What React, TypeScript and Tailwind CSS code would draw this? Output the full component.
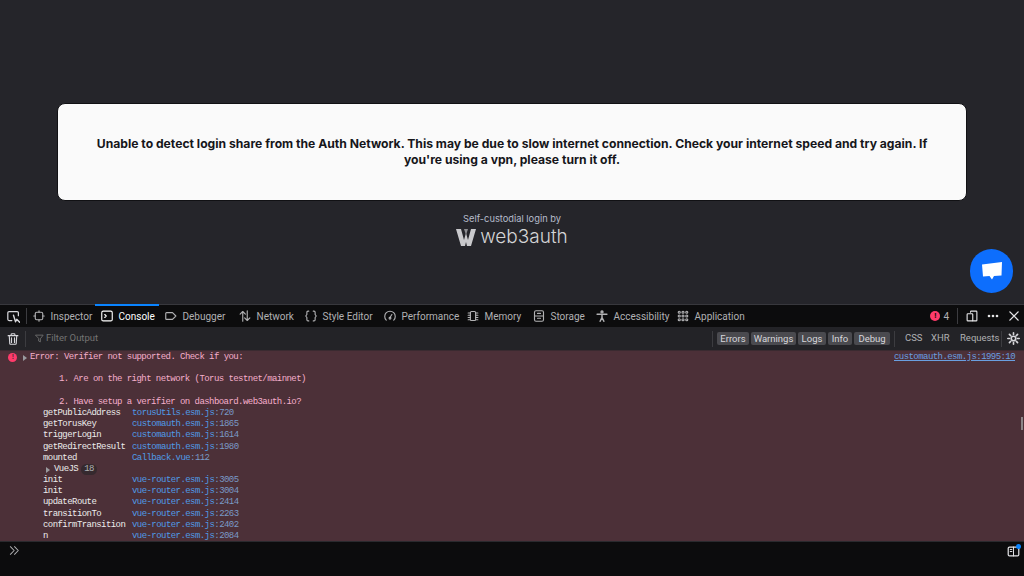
const ui = { fontFamily: 'Roboto, sans-serif' };

function Icon({ children, w = 12 }: { children: React.ReactNode; w?: number }) {
  return (
    <svg width={w} height={w} viewBox="0 0 16 16" fill="none" stroke="currentColor" strokeWidth="1.5" strokeLinecap="round" strokeLinejoin="round" className="shrink-0">
      {children}
    </svg>
  );
}

const tabs = [
  { label: "Inspector", w: "w-[68px]", icon: <><rect x="3" y="3" width="10" height="10" rx="2" /><path d="M8 1v2M8 13v2M1 8h2M13 8h2" /></> },
  { label: "Console", w: "w-[64px]", active: true, icon: <><rect x="1" y="1.500" width="14" height="13" rx="2" /><path d="M5 6l2 2-2 2" /></> },
  { label: "Debugger", w: "w-[74px]", icon: <path d="M2 3.500h8l4.500 4.500-4.500 4.500H2a1 1 0 0 1-1-1v-7a1 1 0 0 1 1-1z" /> },
  { label: "Network", w: "w-[66px]", icon: <path d="M5 15V2M1.500 5.500L5 2l3.500 3.500M11 1v13M7.500 10.500L11 14l3.500-3.500" /> },
  { label: "Style Editor", w: "w-[79px]", icon: <path d="M5 1.500H4a1.500 1.500 0 0 0-1.500 1.500v3L1 8l1.500 2v3A1.500 1.500 0 0 0 4 14.500h1M11 1.500h1A1.500 1.500 0 0 1 13.500 3v3L15 8l-1.500 2v3a1.500 1.500 0 0 1-1.500 1.500h-1" /> },
  { label: "Performance", w: "w-[83px]", icon: <><path d="M3 13.500A7 7 0 1 1 13 13.500" /><path d="M8 10l2.500-4" /><circle cx="8" cy="11" r="1.200" /></> },
  { label: "Memory", w: "w-[66px]", icon: <><rect x="4.500" y="2" width="7" height="12" rx="1.500" /><path d="M1.500 4h3M1.500 7h3M1.500 10h3M1.500 13h3M11.500 4h3M11.500 7h3M11.500 10h3M11.500 13h3" /></> },
  { label: "Storage", w: "w-[63px]", icon: <><rect x="2" y="1" width="12" height="14" rx="2" /><path d="M2 8h12M6 4.500h4M6 11h4" /></> },
  { label: "Accessibility", w: "w-[81px]", icon: <><circle cx="8" cy="2.500" r="1.500" fill="currentColor" /><path d="M1.500 5.500h13M8 5.500V10M8 10l-2.500 5M8 10l2.500 5" strokeWidth="2" /></> },
  { label: "Application", w: "w-[80px]", icon: <><circle cx="3" cy="3" r="1.400" /><circle cx="8" cy="3" r="1.400" /><circle cx="13" cy="3" r="1.400" /><circle cx="3" cy="8" r="1.400" /><circle cx="8" cy="8" r="1.400" /><circle cx="13" cy="8" r="1.400" /><circle cx="3" cy="13" r="1.400" /><circle cx="8" cy="13" r="1.400" /><circle cx="13" cy="13" r="1.400" /></> },
];

const stack = [
  ["getPublicAddress", "torusUtils.esm.js", "720"],
  ["getTorusKey", "customauth.esm.js", "1865"],
  ["triggerLogin", "customauth.esm.js", "1614"],
  ["getRedirectResult", "customauth.esm.js", "1980"],
  ["mounted", "Callback.vue", "112"],
];

const stack2 = [
  ["init", "vue-router.esm.js", "3005"],
  ["init", "vue-router.esm.js", "3004"],
  ["updateRoute", "vue-router.esm.js", "2414"],
  ["transitionTo", "vue-router.esm.js", "2263"],
  ["confirmTransition", "vue-router.esm.js", "2402"],
  ["n", "vue-router.esm.js", "2084"],
];

function Frame({ row }: { row: string[] }) {
  return (
    <div className="flex h-[11.200px] pl-[43px] items-center">
      <span className="w-[89px] shrink-0 text-[#ececec]">{row[0]}</span>
      <span className="text-[#4f9be6]">{row[1]}<span className="text-[#7a9ac6]">:{row[2]}</span></span>
    </div>
  );
}

function Divider() {
  return <div className="w-px h-[16px] self-center bg-[#3c3c40] shrink-0" />;
}

export default function App() {
  return (
    <div className="flex flex-col h-[576px] w-[1024px] overflow-hidden bg-[#25252a]">
      {/* page */}
      <div className="relative h-[304px] shrink-0 px-[57px] pt-[103px] flex flex-col items-center" style={{ fontFamily: 'Inter, sans-serif' }}>
        <div className="w-[910px] h-[98px] rounded-[8px] bg-[#fafafa] border border-[#111114] flex flex-col items-center justify-center pb-[1px]">
          <p className="text-[12.150px] leading-[16px] font-bold text-[#16161a] text-center">
            Unable to detect login share from the Auth Network. This may be due to slow internet connection. Check your internet speed and try again. If
            <br />
            you're using a vpn, please turn it off.
          </p>
        </div>
        <div className="mt-[12px] text-[9.300px] leading-[12px] text-[#b5bccb]">Self-custodial login by</div>
        <div className="flex items-center gap-[4px] h-[22px] mt-[1px] text-[#d4d4d6]">
          <svg width="20" height="17" viewBox="0 0 20 17">
            <path d="M0 0h5l3 11 2-7 2 7 3-11h5l-5 17h-4l-1-4-1 4H5z" fill="#c9c9cc" />
            <path d="M8 0h4l-2 6z" fill="#8e8e92" />
          </svg>
          <span className="text-[19px] leading-[22px] font-light">web3auth</span>
        </div>
        <button className="absolute left-[970px] top-[249px] w-[43px] h-[44px] rounded-full bg-[#0d6efd] flex items-center justify-center">
          <svg width="22" height="20" viewBox="0 0 22 20">
            <path d="M1 3.500L21 1l-.5 13.500-7.500.5-2 3.500-2.500-3.500-6.500.5z" fill="#fff" />
          </svg>
        </button>
      </div>

      {/* toolbar */}
      <div className="h-[23px] shrink-0 bg-[#0c0c0d] flex items-stretch border-t border-[#38383d] text-[10px] text-[#b1b1b3]" style={ui}>
        <div className="w-[27px] flex items-center pl-[7px] shrink-0 text-[#d7d7db]">
          <Icon w={13}><path d="M14 7V3.500A1.500 1.500 0 0 0 12.500 2h-10A1.500 1.500 0 0 0 1 3.500v8A1.500 1.500 0 0 0 2.500 13H6" /><path d="M8 6.500l2.500 8 1.500-3 3.500 3.500" strokeWidth="1.700" /></Icon>
        </div>
        <div className="w-px h-[16px] self-center bg-[#3c3c40] -ml-[1px]" />
        {tabs.map((t) => (
          <div key={t.label} className={`${t.w} relative flex items-center pl-[6px] gap-[5.500px] shrink-0 ${t.active ? "text-white" : ""}`}>
            {t.active && <div className="absolute left-0 right-0 -top-[1px] h-[2px] bg-[#0a84ff]" />}
            <Icon>{t.icon}</Icon>
            <span className="whitespace-nowrap">{t.label}</span>
          </div>
        ))}
        <div className="flex-1" />
        <div className="flex items-center gap-[3px] pr-[8px]">
          <span className="w-[10px] h-[10px] rounded-full bg-[#ff3b6b] text-[#0c0c0d] text-[8px] font-bold leading-[10px] text-center">!</span>
          <span className="text-[#b1b1b3]">4</span>
        </div>
        <Divider />
        <div className="flex items-center pl-[8px] gap-[9px] pr-[4px] text-[#e4e4e6]">
          <Icon w={12}><path d="M6 3V2.500A1 1 0 0 1 7 1.500h6.500a1 1 0 0 1 1 1v11a1 1 0 0 1-1 1H9" /><rect x="1.500" y="5" width="7.500" height="9.500" rx="1" /></Icon>
          <svg width="12" height="12" viewBox="0 0 12 12" fill="currentColor"><circle cx="2" cy="6" r="1.300" /><circle cx="6" cy="6" r="1.300" /><circle cx="10" cy="6" r="1.300" /></svg>
          <Icon w={12}><path d="M2.500 2.500l11 11M13.500 2.500l-11 11" strokeWidth="1.800" /></Icon>
        </div>
      </div>

      {/* filter bar */}
      <div className="h-[23px] shrink-0 bg-[#232327] flex items-center text-[9.500px] text-[#b1b1b3]" style={ui}>
        <div className="w-[25px] pl-[7px] text-[#d7d7db]">
          <Icon w={12}><path d="M1.500 3.500h13M5.500 3.500V2a1 1 0 0 1 1-1h3a1 1 0 0 1 1 1v1.500M3 3.500l.7 10.500a1 1 0 0 0 1 1h6.600a1 1 0 0 0 1-1L13 3.500M6 6.500v6M10 6.500v6" /></Icon>
        </div>
        <Divider />
        <div className="flex items-center gap-[2px] pl-[9px] text-[#737373]">
          <Icon w={9}><path d="M1.500 2h13L9.500 8.500V14l-3-1.500v-4z" /></Icon>
          <span>Filter Output</span>
        </div>
        <div className="flex-1" />
        <Divider />
        <div className="flex items-center gap-[2px] pl-[4px] pr-[4px] text-[#d7d7db]">
          {[["Errors", "w-[32px]"], ["Warnings", "w-[45px]"], ["Logs", "w-[28px]"], ["Info", "w-[24px]"], ["Debug", "w-[36px]"]].map(([label, w]) => (
            <span key={label} className={`${w} h-[13px] rounded-[2px] bg-[#4a4a4f] leading-[13px] text-center`}>{label}</span>
          ))}
        </div>
        <Divider />
        <div className="flex items-center pl-[10px] pr-[6px] gap-[12px]">
          <span className="w-[14px]">CSS</span>
          <span className="w-[17px]">XHR</span>
          <span className="w-[35px] whitespace-nowrap">Requests</span>
        </div>
        <Divider />
        <div className="pl-[5px] pr-[4px] text-[#d7d7db]">
          <Icon w={13}><circle cx="8" cy="8" r="2.800" strokeWidth="2" /><path d="M8 1v2M8 13v2M1 8h2M13 8h2M3 3l1.500 1.500M11.500 11.500L13 13M13 3l-1.500 1.500M4.500 11.500L3 13" strokeWidth="2" /></Icon>
        </div>
      </div>

      {/* console output */}
      <div className="relative h-[191px] shrink-0 overflow-hidden bg-[#4c3038] text-[9px] tracking-[-0.560px] leading-[11.200px] border-t border-[#3a2a30]" style={{ fontFamily: '"Liberation Mono", monospace' }}>
        <div className="pt-[1px] text-[#f5aecb]">
          <div className="relative flex h-[11.200px] pl-[30px] items-center">
            <span className="absolute left-[8px] top-[1px] w-[9px] h-[9px] rounded-full bg-[#ff3b6b] text-[7px] font-bold leading-[9px] text-center text-[#4c3038]">!</span>
            <span className="absolute left-[23px] top-[3px] w-0 h-0 border-y-[3px] border-y-transparent border-l-[4px] border-l-[#9a9a9e]" />
            <span>Error: Verifier not supported. Check if you:</span>
            <span className="absolute left-[894px] text-[#6a9fe0] underline">customauth.esm.js:1995:10</span>
          </div>
          <div className="h-[11.200px]" />
          <div className="pl-[59px]">1. Are on the right network (Torus testnet/mainnet)</div>
          <div className="h-[11.200px]" />
          <div className="pl-[59px]">2. Have setup a verifier on dashboard.web3auth.io?</div>
        </div>
        {stack.map((r, i) => <Frame key={i} row={r} />)}
        <div className="relative flex h-[11.200px] items-center pl-[54px] text-[#ececec]">
          <span className="absolute left-[46px] top-[3px] w-0 h-0 border-y-[3px] border-y-transparent border-l-[4px] border-l-[#9a9a9e]" />
          <span>VueJS</span>
          <span className="ml-[3px] px-[3px] h-[11px] leading-[11px] rounded-full bg-[#35292e] text-[#b1b1b3]">18</span>
        </div>
        {stack2.map((r, i) => <Frame key={i} row={r} />)}
        <div className="absolute right-[1px] top-[66px] w-[2px] h-[13px] bg-[#8d8588]" />
      </div>

      {/* console input */}
      <div className="flex-1 bg-[#0c0c0d] border-t border-[#2a2a2e] relative text-[#b1b1b3]">
        <div className="absolute left-[9px] top-[3px]">
          <Icon w={11}><path d="M2 2.500L7.500 8 2 13.500M8 2.500L13.500 8 8 13.500" /></Icon>
        </div>
        <div className="absolute right-[4px] top-[3px] text-[#e4e4e6]">
          <Icon w={13}><rect x="1.500" y="2.500" width="13" height="11" rx="1.500" /><path d="M8 2.500v11M4 5.500h2M4 8h2" strokeWidth="1.200" /></Icon>
          <span className="absolute -right-[1px] -top-[1px] w-[5px] h-[5px] rounded-full bg-[#0a84ff]" />
        </div>
      </div>
    </div>
  );
}
